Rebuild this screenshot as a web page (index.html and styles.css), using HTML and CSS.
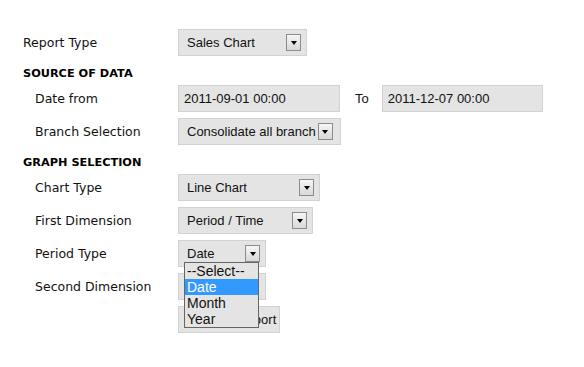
FILE: index.html
```html
<!DOCTYPE html>
<html lang="en">
<head>
    <meta charset="UTF-8">
    <title>Sales Report</title>
    <link rel="stylesheet" href="styles.css">
</head>
<body>
    <div class="report-form">
        <div class="row">
            <span class="label">Report Type</span>
            <div class="select w-report">Sales Chart<span class="arrow"></span></div>
        </div>

        <div class="section">SOURCE OF DATA</div>

        <div class="row sub">
            <span class="label">Date from</span>
            <div class="input w-date">2011-09-01 00:00</div>
            <span class="to">To</span>
            <div class="input w-date-to">2011-12-07 00:00</div>
        </div>
        <div class="row sub">
            <span class="label">Branch Selection</span>
            <div class="select w-branch">Consolidate all branch<span class="arrow tight"></span></div>
        </div>

        <div class="section">GRAPH SELECTION</div>

        <div class="row sub">
            <span class="label">Chart Type</span>
            <div class="select w-chart">Line Chart<span class="arrow"></span></div>
        </div>
        <div class="row sub">
            <span class="label">First Dimension</span>
            <div class="select w-first">Period / Time<span class="arrow"></span></div>
        </div>
        <div class="row sub">
            <span class="label">Period Type</span>
            <div class="select w-period open">Date<span class="arrow"></span>
                <!-- opened option list -->
                <ul class="options">
                    <li>--Select--</li>
                    <li class="selected">Date</li>
                    <li>Month</li>
                    <li>Year</li>
                </ul>
            </div>
        </div>
        <div class="row sub">
            <span class="label">Second Dimension</span>
            <div class="select w-period"></div>
        </div>
        <div class="row sub">
            <span class="label"></span>
            <button class="btn">Display Report</button>
        </div>
    </div>
</body>
</html>
```

FILE: styles.css
```css
body {
    margin: 0;
    background: #ffffff;
    color: #111;
}

.report-form {
    padding: 29px 0 0 23px;
    font-family: 'DejaVu Sans', Verdana, sans-serif;
    font-size: 12.5px;
}

.row {
    display: flex;
    align-items: center;
    height: 27px;
    margin-bottom: 6px;
}

.label {
    width: 155px;
    flex-shrink: 0;
    box-sizing: border-box;
}

.sub .label {
    padding-left: 12px;
}

.section {
    font-weight: bold;
    font-size: 11.3px;
    line-height: 23px;
    margin-top: -6px;
    padding-top: 6px;
    height: 23px;
    color: #000;
}

.select,
.input,
.btn {
    box-sizing: border-box;
    height: 27px;
    display: flex;
    align-items: center;
    background: #e4e4e4;
    border: 1px solid #d2d2d2;
    font-family: 'Liberation Sans', Arial, sans-serif;
    font-size: 13px;
    color: #111;
}

.select {
    position: relative;
    padding: 0 5px 0 8px;
}

.input {
    padding: 0 5px;
}

.arrow {
    margin-left: auto;
    width: 15px;
    height: 17px;
    box-sizing: border-box;
    border: 1px solid #8c8c8c;
    background: linear-gradient(#f6f6f6, #d8d8d8);
    display: flex;
    align-items: center;
    justify-content: center;
}

.arrow.tight {
    margin-left: 2px;
}

.arrow::after {
    content: "";
    border-top: 4px solid #000;
    border-left: 3.5px solid transparent;
    border-right: 3.5px solid transparent;
    margin-top: 1px;
}

.w-report { width: 129px; }
.w-date { width: 162px; }
.w-date-to { width: 161px; }
.w-branch { width: 163px; }
.w-chart { width: 142px; }
.w-first { width: 135px; }
.w-period { width: 88px; }

.to {
    margin: 0 13px 0 15px;
    font-family: 'Liberation Sans', Arial, sans-serif;
    font-size: 13px;
}

.btn {
    width: 102px;
    padding: 0 4px 0 12px;
    white-space: nowrap;
    overflow: hidden;
}

.options {
    position: absolute;
    left: 5px;
    top: 21px;
    width: 75px;
    margin: 0;
    padding: 0;
    list-style: none;
    box-sizing: border-box;
    border: 1px solid #666;
    background: #e4e4e4;
    font-size: 14px;
    z-index: 2;
}

.options li {
    height: 16px;
    line-height: 16px;
    padding-left: 2px;
}

.options .selected {
    background: #3399ff;
    color: #ffffff;
}
```
